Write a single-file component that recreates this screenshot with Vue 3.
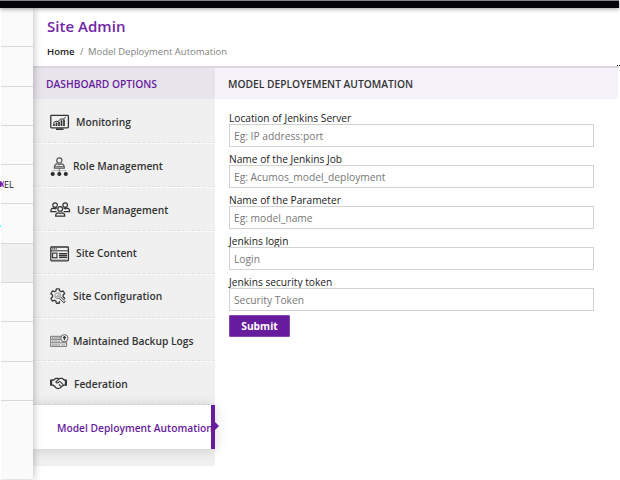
<script setup>
const items = [
  { label: 'Monitoring', icon: 'monitor' },
  { label: 'Role Management', icon: 'role' },
  { label: 'User Management', icon: 'users' },
  { label: 'Site Content', icon: 'pages' },
  { label: 'Site Configuration', icon: 'config' },
  { label: 'Maintained Backup Logs', icon: 'backup' },
  { label: 'Federation', icon: 'federation' },
]
const fields = [
  { label: 'Location of Jenkins Server', hint: 'Eg: IP address:port' },
  { label: 'Name of the Jenkins Job', hint: 'Eg: Acumos_model_deployment' },
  { label: 'Name of the Parameter', hint: 'Eg: model_name' },
  { label: 'Jenkins login', hint: 'Login' },
  { label: 'Jenkins security token', hint: 'Security Token' },
]
</script>

<template>
  <div class="page">
    <div class="topbar"></div>
    <div class="body">
      <aside class="rail">
        <div class="cell first"></div>
        <div class="cell"></div>
        <div class="cell"></div>
        <div class="cell"></div>
        <div class="cell model"><i></i><span>EL</span></div>
        <div class="cell cyan"></div>
        <div class="cell shade"></div>
        <div class="cell"></div>
        <div class="cell"></div>
        <div class="cell"></div>
      </aside>
      <main class="main">
        <header class="header">
          <h1>Site Admin</h1>
          <nav><b>Home</b><span class="slash">/</span><span class="crumb">Model Deployment Automation</span></nav>
          <span class="dots"></span>
        </header>
        <div class="columns">
          <section class="side">
            <h2>DASHBOARD OPTIONS</h2>
            <ul>
              <li v-for="it in items" :key="it.icon" :class="it.icon">
                <svg v-if="it.icon === 'monitor'" width="20" height="17" viewBox="0 0 20 17" fill="none" stroke="#333">
                  <rect x=".8" y="1.3" width="17.6" height="12.6" rx=".8" stroke-width="1.3" />
                  <path d="M3 9.2l3-2 2 .3 3-2.7 2 .5 2.7-2.2" />
                  <path d="M4 12V9.8M6.5 12V8.5M9 12V7.8M11.5 12V6.2M14 12V5.5" stroke-width="1.7" />
                  <path d="M6 15.2h7.5" stroke-width="1.6" />
                </svg>
                <svg v-else-if="it.icon === 'role'" width="18" height="20" viewBox="0 0 18 20" fill="none" stroke="#555">
                  <circle cx="9.3" cy="3.4" r="2.6" stroke-width="1.2" />
                  <path d="M4.3 11.1c0-2.8 1.4-4.2 3.3-4.2l1.7 1 1.7-1c2 0 3.4 1.4 3.4 4.2z" stroke-width="1.1" />
                  <path d="M5 9.6h9M9.3 11.5V16" stroke-width=".9" /><path d="M2.7 16v-2.4h13.1V16" stroke="#aaa" stroke-width=".7" />
                  <g fill="#2c2c2c" stroke="none"><circle cx="2.7" cy="17" r="2.1" /><circle cx="9.3" cy="17" r="2.1" /><circle cx="15.8" cy="17" r="2.1" /></g>
                </svg>
                <svg v-else-if="it.icon === 'users'" width="21" height="16" viewBox="0 0 21 16" fill="none" stroke="#333" stroke-width="1.2">
                  <circle cx="5.1" cy="3.1" r="2.3" /><circle cx="15.2" cy="3.1" r="2.3" />
                  <circle cx="10.2" cy="7" r="2.4" />
                  <path d="M5.6 14.2c0-2.2 1.2-3.4 3-3.4l1.6.7 1.6-.7c1.8 0 3 1.2 3 3.4z" />
                  <path d="M6.6 9.7H.8c0-2.3 1.2-3.5 2.8-3.5l1.4.6 1.8-.6M13.8 9.7h5.8c0-2.3-1.2-3.5-2.8-3.5l-1.4.6-1.8-.6" />
                </svg>
                <svg v-else-if="it.icon === 'pages'" width="20" height="16" viewBox="0 0 20 16" fill="none" stroke="#333">
                  <rect x=".8" y="1" width="17.6" height="13.8" rx=".8" stroke-width="1.3" />
                  <path d="M1 4.8h17.5" /><path d="M2.3 2.8h4.5" stroke-width="1.2" stroke-dasharray="1.1 .6" />
                  <rect x="2.6" y="7.1" width="4.3" height="4.6" stroke-width="1.1" />
                  <path d="M9 7.7h8M9 9.5h8M9 11.3h8" stroke-width="1.3" /><path d="M2 13.3h15" stroke="#888" stroke-width=".6" />
                </svg>
                <svg v-else-if="it.icon === 'config'" width="17" height="17" viewBox="0 0 17 17" fill="none" stroke="#3c3c3c" stroke-width="1.35" stroke-linejoin="round">
                  <path d="M9.6 13.1l-.4 2.1H6.4l-.5-2.1-1.3-.8-2.2.7L.9 10.5l1.6-1.6V7.1L.9 5.5 2.4 3l2.2.7 1.3-.8.5-2.1h2.8l.5 2.1 1.3.8L13.2 3l1.5 2.5-1.6 1.6v1.7l1.6 1.4-.5.9" />
                  <circle cx="7.8" cy="7.8" r="2.9" stroke-width=".8" stroke="#777" />
                  <path d="M6.3 9l2.7-2.7M7.6 9.6l2-2" stroke-width=".8" stroke="#666" />
                  <path d="M9.3 10.3l4.5 4.7 1.5-1.3-4.5-4.7" fill="#ddd" stroke-width=".9" />
                </svg>
                <svg v-else-if="it.icon === 'backup'" width="19" height="14" viewBox="0 0 19 14" fill="none" stroke="#666">
                  <path d="M11 2.3H.6v3h11M.6 5.6v3.2h16V7.5M.6 9.2v3.2h16V9" stroke-width=".9" />
                  <path d="M2 3.8h8M2 7.2h8M2 10.8h8" stroke-width="1.3" stroke-dasharray="1 .4" stroke="#888" />
                  <path d="M11.5 7.2h3M11.5 10.8H15" stroke-width=".6" />
                  <circle cx="14.4" cy="4.2" r="3.6" fill="#f4f4f4" /><path d="M14.4 6.2V2.8M13 4l1.4-1.5L15.8 4" stroke="#333" stroke-width="1.1" />
                </svg>
                <svg v-else width="17" height="13" viewBox="0 0 17 13" fill="none" stroke="#333" stroke-width="1.3">
                  <path d="M1.1 2.4v6.4M15.9 2.4v6.4" stroke-width="2.1" />
                  <path d="M2 3h1.6l2.2-1.7h2.1L9 2l1.2-.7h2L14.3 3H15M2 8.2h1.3l3 2.8 1.8.6 1.9-.6 3.3-2.8H15" />
                  <path d="M9 2L5.9 4.9c.8 1.7 2.2 1.3 3.3-.2h1l3 3M9 7.5l1.6 1.5" stroke-width="1.15" />
                </svg>
                <span>{{ it.label }}</span>
              </li>
              <li class="active"><span>Model Deployment Automation</span></li>
            </ul>
          </section>
          <section class="content">
            <h2>MODEL DEPLOYEMENT AUTOMATION</h2>
            <form @submit.prevent>
              <label v-for="f in fields" :key="f.label"><span>{{ f.label }}</span><input type="text" :placeholder="f.hint"></label>
              <button>Submit</button>
            </form>
          </section>
        </div>
      </main>
    </div>
  </div>
</template>

<style>
body { background: #fff; }
</style>
<style scoped>
* { box-sizing: border-box; }
.page { width: 620px; height: 480px; overflow: hidden; display: flex; flex-direction: column; font-family: "Open Sans", sans-serif; color: #333; background: #fff; }
.topbar { height: 8px; width: 619px; background: #04020a; border-top: 1px solid #858585; box-shadow: 0 1px 4px rgba(0,0,0,.4); position: relative; z-index: 3; flex: none; }
.body { display: flex; flex: 1; }
.rail { width: 33px; height: 471px; background: #fafafa; border-left: 1px solid #fff; box-shadow: 1px 0 7px rgba(0,0,0,.25); position: relative; z-index: 2; }
.cell { height: 39.3px; border-bottom: 1px solid #d8d8d8; }
.cell.shade { background: #f0f0f0; }
.model { display: flex; align-items: center; font-size: 9.2px; color: #222; }
.model i { width: 4px; height: 6px; margin-left: -1px; background: linear-gradient(90deg, #444, #a0f 60%, #22d); clip-path: polygon(0 0, 35% 0, 60% 35%, 80% 0, 100% 0, 80% 50%, 100% 100%, 75% 100%, 50% 65%, 20% 100%, 0 100%); }
.cyan { display: flex; align-items: center; }
.cyan::before { content: ""; width: 1px; height: 2px; margin: 5px 0 0 -1px; background: #5ff; }
.main { width: 587px; }
.header { height: 60px; padding: 8px 0 0 14px; border-bottom: 2px solid #d9d7dd; position: relative; width: 586px; }
h1 { margin: 0; font-size: 15px; line-height: 20px; font-weight: 600; color: #6f25a5; letter-spacing: .03px; }
nav { display: flex; font-size: 9.5px; line-height: 14px; margin-top: 9px; }
nav b { font-weight: 600; color: #222; width: 33px; }
.slash { width: 8px; color: #777; }
.crumb { color: #828282; white-space: nowrap; letter-spacing: -.01px; }
.dots { position: absolute; right: -1px; bottom: 0; width: 3px; height: 1px; background: repeating-linear-gradient(90deg, #111 0 1px, #fff 1px 2px); }
.columns { display: flex; }
.side { width: 182px; height: 398px; background: #f0f0f0; }
h2 { margin: 0; height: 31px; line-height: 32px; font-size: 10.25px; font-weight: 600; white-space: nowrap; }
.side h2 { background: #e7e4eb; color: #671c9d; padding-left: 13px; }
ul { list-style: none; margin: 0; padding: .8px 0 0; }
li { height: 43.6px; display: flex; align-items: center; padding: 3px 0 0 17px; border-bottom: 1px dashed #e0e0e0; font-size: 10.25px; font-weight: 600; white-space: nowrap; box-shadow: 0 1px #fafafa; }
li svg { flex: none; }
li span { line-height: 15px; }
.monitor span { margin-left: 6px; }
.role span { margin-left: 5px; }
.users span { margin-left: 6px; }
.role, .users, .pages, .backup { padding-top: 4px; }
.pages span { margin-left: 6px; }
.config span { margin-left: 6px; }
.backup span { margin-left: 4px; letter-spacing: -.02px; }
.federation span { margin-left: 7px; }
.federation svg { margin-top: -2px; }
.active { background: #fff; color: #671c9d; padding-left: 24px; border-bottom: 0; border-right: 4px solid #671c9d; position: relative; box-shadow: 0 1px 12px rgba(0,0,0,.16); }
.active::after { content: ""; position: absolute; right: -8px; top: 17px; border: 4px solid transparent; border-left-color: #671c9d; border-right: 0; }
.content { flex: 1; }
.content h2 { width: 403px; background: #f5f2fa; padding-left: 13px; color: #333; }
form { padding: 12px 0 0 14px; width: 379px; }
label { display: flex; flex-direction: column; height: 41px; font-size: 10.2px; line-height: 14px; color: #222; }
label span { height: 14px; }
input { height: 23px; width: 365px; border: 1px solid #d2d2d2; padding: 0 4px; margin-top: -1px; font: 10.25px "Open Sans", sans-serif; background: transparent; outline: 0; }
input::placeholder { color: #777; opacity: 1; }
button { display: block; width: 61px; height: 22px; margin-top: -1px; border: 1px solid #8447b0; border-radius: 1px; padding: 0; background: #671c9d; color: #fff; font: 700 10.25px "Open Sans", sans-serif; }
</style>
